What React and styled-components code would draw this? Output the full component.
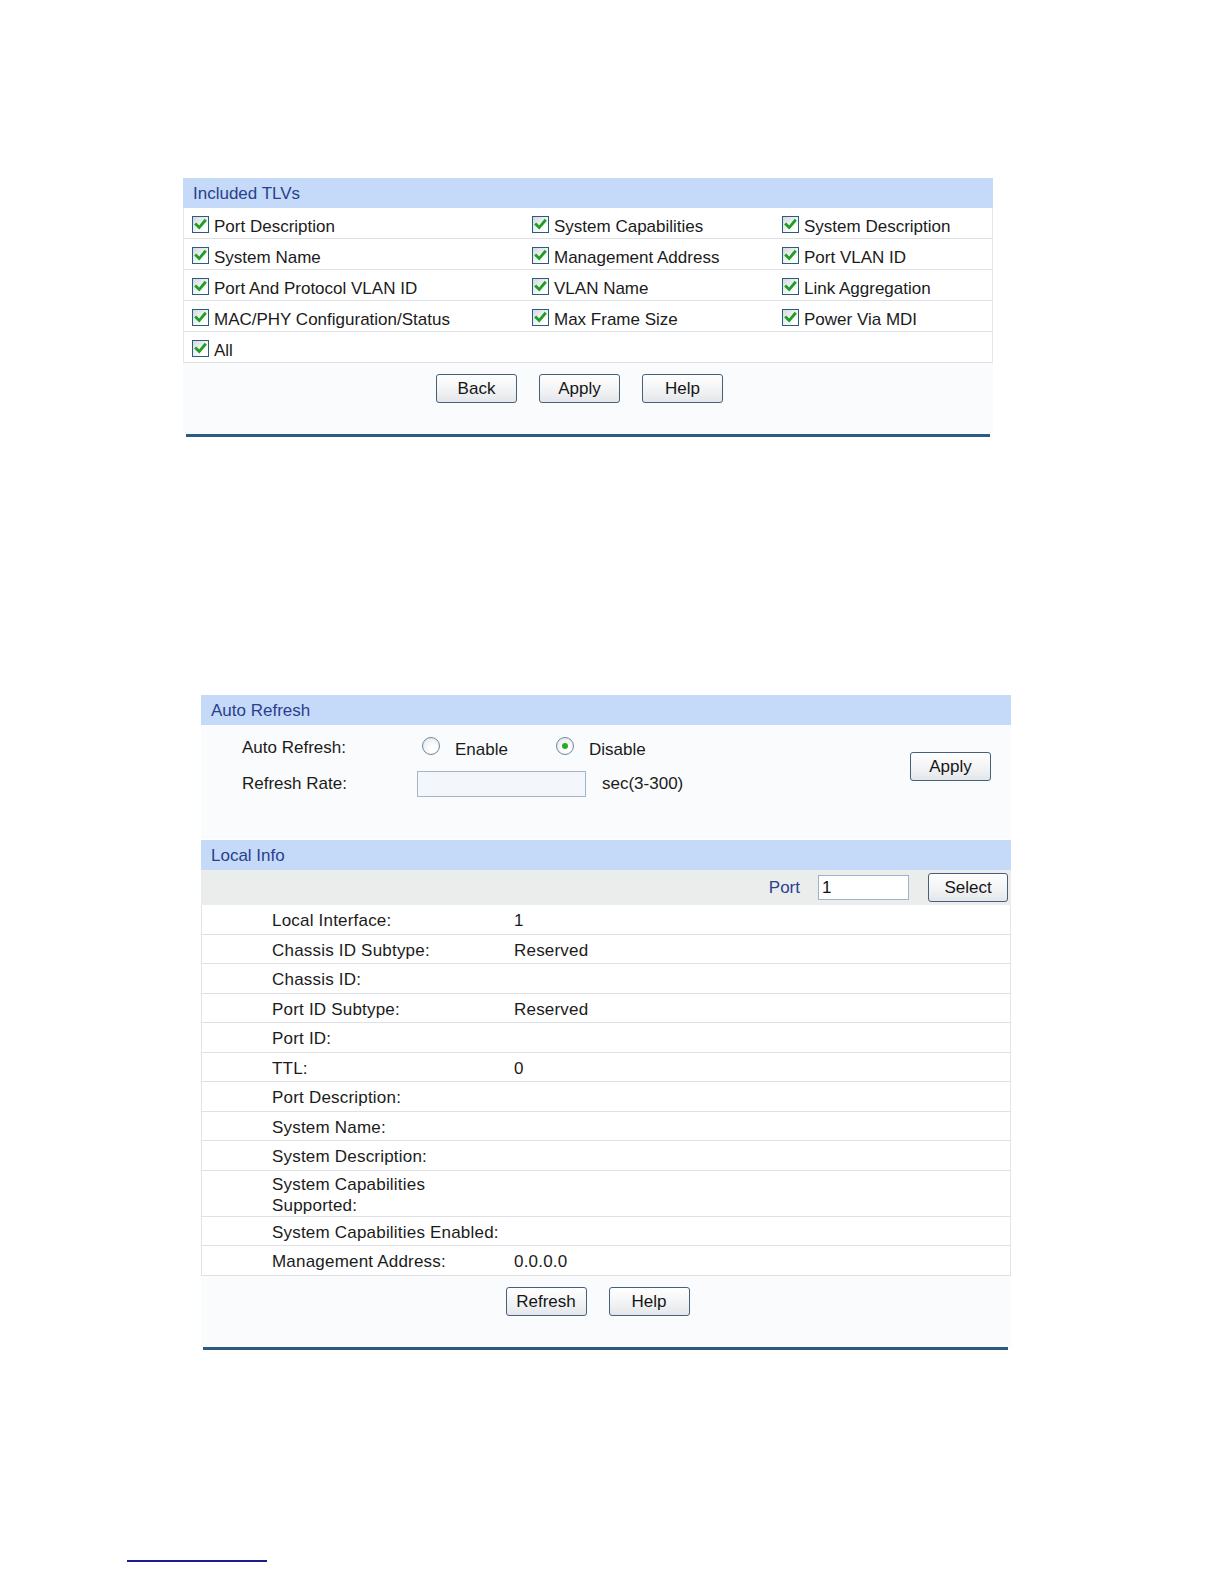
import React from "react";
import styled, { createGlobalStyle } from "styled-components";

const Global = createGlobalStyle`
  html, body { margin: 0; padding: 0; background: #ffffff; }
  * { box-sizing: border-box; }
`;

const Page = styled.div`
  width: 1224px;
  min-height: 1584px;
  padding-top: 178px;
  font-family: "Liberation Sans", Arial, sans-serif;
  font-size: 17px;
  color: #1b1b1b;
  display: flex;
  flex-direction: column;
`;

const Section = styled.section`
  width: 810px;
  margin-left: ${(p) => p.$left}px;
  margin-top: ${(p) => p.$top || 0}px;
`;

const Header = styled.div`
  height: 30px;
  background: #c4daf8;
  color: #2b3f8c;
  padding: 2px 0 0 10px;
  display: flex;
  align-items: center;
  margin-top: ${(p) => p.$top || 0}px;
`;

const TlvRow = styled.div`
  display: grid;
  grid-template-columns: 340px 250px 1fr;
  height: 31px;
  border-left: 1px solid #e4e7eb;
  border-right: 1px solid #e4e7eb;
  border-bottom: 1px solid #dde1e6;
  background: #ffffff;
`;

const CheckItem = styled.label`
  display: flex;
  align-items: center;
  gap: 5px;
  padding: 8px 0 0 8px;
  white-space: nowrap;
`;

const Box = styled.span`
  flex: none;
  width: 17px;
  height: 17px;
  border: 1px solid #2a5c7c;
  background: linear-gradient(135deg, #d6dadd 0%, #ffffff 80%);
  display: inline-flex;
  align-items: center;
  justify-content: center;
  margin-top: -5px;
`;

const Actions = styled.div`
  display: flex;
  justify-content: center;
  align-items: flex-start;
  gap: 22px;
  height: ${(p) => p.$h}px;
  padding: 11px 17px 0 0;
  background: #fafbfc;
`;

const Button = styled.button`
  width: ${(p) => p.$w || 81}px;
  height: 29px;
  border: 1px solid #46607a;
  border-radius: 3px;
  background: linear-gradient(#ffffff 0%, #f2f3f5 55%, #e3e6ea 100%);
  font-family: "Liberation Sans", Arial, sans-serif;
  font-size: 17px;
  color: #161616;
  padding: 1px 0 0;
  cursor: pointer;
`;

const Rule = styled.div`
  height: 3px;
  background: #2c5a80;
  margin: 0 3px 0 ${(p) => p.$l}px;
`;

const AutoBody = styled.div`
  display: flex;
  align-items: center;
  padding: 5px 20px 37px 41px;
  background: #fafbfc;
`;

const FormGrid = styled.div`
  display: grid;
  grid-template-columns: 175px auto;
  grid-auto-rows: 36px;
  align-items: center;
`;

const Control = styled.div`
  display: flex;
  align-items: center;
`;

const RadioOption = styled.label`
  display: flex;
  align-items: center;
  gap: 15px;
  width: 139px;
  padding: 3px 0 0 ${(p) => (p.$first ? 5 : 0)}px;
`;

const Radio = styled.span`
  flex: none;
  width: 18px;
  height: 18px;
  border-radius: 50%;
  border: 1px solid #6d8ba3;
  background: radial-gradient(circle at 60% 65%, #ffffff 20%, #e4e6e8 90%);
  display: inline-flex;
  align-items: center;
  justify-content: center;
  margin-top: -7px;
  &::after {
    content: "";
    width: 6px;
    height: 6px;
    border-radius: 50%;
    background: ${(p) => (p.$on ? "#2aa82a" : "transparent")};
  }
`;

const RateInput = styled.input`
  width: 169px;
  height: 26px;
  border: 1px solid #a3b6c9;
  background: #f3f6fa;
  font-family: inherit;
  font-size: 17px;
`;

const Hint = styled.span`
  margin-left: 16px;
`;

const RightButton = styled(Button)`
  margin-left: auto;
`;

const PortBar = styled.div`
  height: 35px;
  background: #ebecec;
  display: flex;
  justify-content: flex-end;
  align-items: center;
  padding-right: 3px;
`;

const PortLabel = styled.span`
  color: #2b3f8c;
  margin-right: 18px;
`;

const PortInput = styled.input`
  width: 91px;
  height: 25px;
  border: 1px solid #9fb2c6;
  background: #ffffff;
  font-family: inherit;
  font-size: 17px;
  padding: 0 3px;
  margin-right: 19px;
  color: #111;
`;

const InfoRow = styled.div`
  display: grid;
  grid-template-columns: 242px 1fr;
  align-items: center;
  min-height: 29.5px;
  padding: 3px 0 0 70px;
  line-height: 21px;
  letter-spacing: 0.2px;
  border-left: 1px solid #e0e3e7;
  border-right: 1px solid #e0e3e7;
  border-bottom: 1px solid #dde1e6;
  background: #ffffff;
`;

const Footer = styled.div`
  width: 140px;
  height: 2px;
  background: #1c1c8a;
  margin: 210px 0 0 127px;
`;

const Check = () => (
  <Box>
    <svg width="13" height="13" viewBox="0 0 12 12">
      <path d="M2 6 L4.8 8.8 L10 2.6" fill="none" stroke="#1f9e24" strokeWidth="2.6" strokeLinecap="square" />
    </svg>
  </Box>
);

const tlvs = [
  ["Port Description", "System Capabilities", "System Description"],
  ["System Name", "Management Address", "Port VLAN ID"],
  ["Port And Protocol VLAN ID", "VLAN Name", "Link Aggregation"],
  ["MAC/PHY Configuration/Status", "Max Frame Size", "Power Via MDI"],
  ["All"],
];

const info = [
  ["Local Interface:", "1"],
  ["Chassis ID Subtype:", "Reserved"],
  ["Chassis ID:", ""],
  ["Port ID Subtype:", "Reserved"],
  ["Port ID:", ""],
  ["TTL:", "0"],
  ["Port Description:", ""],
  ["System Name:", ""],
  ["System Description:", ""],
  [
    <>
      System Capabilities
      <br />
      Supported:
    </>,
    "",
  ],
  ["System Capabilities Enabled:", ""],
  ["Management Address:", "0.0.0.0"],
];

export default function App() {
  return (
    <Page>
      <Global />
      <Section $left={183}>
        <Header>Included TLVs</Header>
        {tlvs.map((row, i) => (
          <TlvRow key={i}>
            {row.map((t) => (
              <CheckItem key={t}>
                <Check />
                {t}
              </CheckItem>
            ))}
          </TlvRow>
        ))}
        <Actions $h={71}>
          <Button>Back</Button>
          <Button>Apply</Button>
          <Button>Help</Button>
        </Actions>
        <Rule $l={3} />
      </Section>

      <Section $left={201} $top={258}>
        <Header>Auto Refresh</Header>
        <AutoBody>
          <FormGrid>
            <span>Auto Refresh:</span>
            <Control>
              <RadioOption $first>
                <Radio />
                Enable
              </RadioOption>
              <RadioOption>
                <Radio $on />
                Disable
              </RadioOption>
            </Control>
            <span>Refresh Rate:</span>
            <Control>
              <RateInput readOnly value="" />
              <Hint>sec(3-300)</Hint>
            </Control>
          </FormGrid>
          <RightButton>Apply</RightButton>
        </AutoBody>

        <Header $top={1}>Local Info</Header>
        <PortBar>
          <PortLabel>Port</PortLabel>
          <PortInput readOnly value="1" />
          <Button $w={80}>Select</Button>
        </PortBar>
        {info.map(([k, v], i) => (
          <InfoRow key={i}>
            <span>{k}</span>
            <span>{v}</span>
          </InfoRow>
        ))}
        <Actions $h={71}>
          <Button>Refresh</Button>
          <Button>Help</Button>
        </Actions>
        <Rule $l={2} />
      </Section>

      <Footer />
    </Page>
  );
}
